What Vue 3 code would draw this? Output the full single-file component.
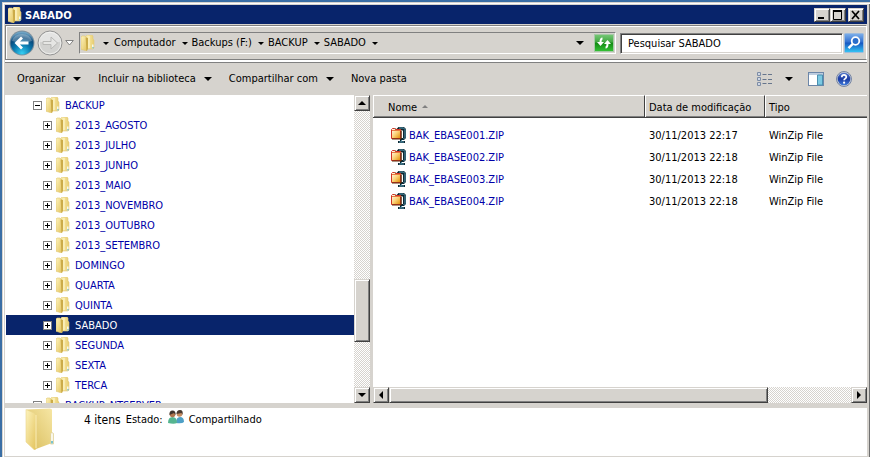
<script setup>
import { ref } from 'vue'

const crumbs = ['Computador', 'Backups (F:)', 'BACKUP', 'SABADO']
const commands = [
  { label: 'Organizar', menu: true },
  { label: 'Incluir na biblioteca', menu: true },
  { label: 'Compartilhar com', menu: true },
  { label: 'Nova pasta', menu: false },
]
const folders = [
  { name: 'BACKUP', root: true, open: true },
  { name: '2013_AGOSTO' },
  { name: '2013_JULHO' },
  { name: '2013_JUNHO' },
  { name: '2013_MAIO' },
  { name: '2013_NOVEMBRO' },
  { name: '2013_OUTUBRO' },
  { name: '2013_SETEMBRO' },
  { name: 'DOMINGO' },
  { name: 'QUARTA' },
  { name: 'QUINTA' },
  { name: 'SABADO' },
  { name: 'SEGUNDA' },
  { name: 'SEXTA' },
  { name: 'TERCA' },
  { name: 'BACKUP_NTSERVER', root: true },
]
const files = [
  { name: 'BAK_EBASE001.ZIP', date: '30/11/2013 22:17', type: 'WinZip File' },
  { name: 'BAK_EBASE002.ZIP', date: '30/11/2013 22:18', type: 'WinZip File' },
  { name: 'BAK_EBASE003.ZIP', date: '30/11/2013 22:18', type: 'WinZip File' },
  { name: 'BAK_EBASE004.ZIP', date: '30/11/2013 22:18', type: 'WinZip File' },
]
const selected = ref('SABADO')
const query = ref('')
</script>

<template>
  <svg class="defs" aria-hidden="true">
    <defs>
      <linearGradient id="gBack" x1="0" x2="1"><stop offset="0" stop-color="#fbf0b4" /><stop offset="1" stop-color="#e8cd70" /></linearGradient>
      <linearGradient id="gFront" x1="0" x2="1" y1="0" y2="1"><stop offset="0" stop-color="#fdf3bd" /><stop offset="1" stop-color="#e3c35c" /></linearGradient>
      <linearGradient id="gInner" x1="0" x2="1" y1="1" y2="0"><stop offset="0" stop-color="#d9bd5c" /><stop offset="1" stop-color="#f6e6a4" /></linearGradient>
      <linearGradient id="gZip" x1="0" x2="1" y1="0" y2="1"><stop offset="0" stop-color="#ffffff" /><stop offset=".5" stop-color="#fbd37a" /><stop offset="1" stop-color="#e08a00" /></linearGradient>
      <symbol id="folder" viewBox="0 0 14 16">
        <path d="M5 1 6 0h5l1 1v3l1 1v8l-1 1H6z" fill="url(#gBack)" stroke="#e2cb7c" stroke-width=".6" />
        <path d="M0 2 1 1h3l2 2v13l-1-.2-5-1.600z" fill="url(#gFront)" stroke="#dfc773" stroke-width=".6" />
        <path d="M4.600 2.500 7 3v11l-1.600 2z" fill="#cbab48" />
        <path d="M8 1v12" stroke="#fff6cc" />
        <path d="M11 9.500h1.500v4H11z" fill="#f4f8ee" />
        <path d="M11.500 12h1v1.500h-1z" fill="#4aa3b5" />
      </symbol>
      <symbol id="zip" viewBox="0 0 16 16">
        <path d="M6 1.500 7.500 0H13l2 2v9l-2 2h-2v1h3v2H7v-2h2v-3h3V4l-1-1H6z" fill="#0c2733" />
        <path d="M8 1h4.500L14 2.500v8L12.500 12" fill="none" stroke="#5b9db5" />
        <path d="M8 15h5M10.500 13v1.500" stroke="#5b9db5" />
        <path d="M1 3v-.500L2 1.500h3l1 1h4.500V12H1z" fill="#40220a" />
        <path d="M.500 2.500 1.500 1.500h2l1 1h5v9h-9z" fill="url(#gZip)" stroke="#d03224" />
        <path d="M1 3.500h8.500" stroke="#e8793e" />
        <path d="M10 4v8H1" fill="none" stroke="#5a2c08" />
      </symbol>
    </defs>
  </svg>

  <main class="window">
    <header class="titlebar">
      <svg class="folder"><use href="#folder" /></svg>
      <h1>SABADO</h1>
      <div class="winbuttons">
        <button class="raised" aria-label="Minimizar"><svg viewBox="0 0 12 10"><path d="M2 8h6" stroke="#000" stroke-width="2" /></svg></button>
        <button class="raised" aria-label="Maximizar"><svg viewBox="0 0 12 10"><path d="M1.500 1v8.500h8V1M1 1h9" fill="none" stroke="#000" /><path d="M1 1h9" stroke="#000" stroke-width="2" /></svg></button>
        <button class="raised close" aria-label="Fechar"><svg viewBox="0 0 12 10"><path d="m2 1 7 8M9 1 2 9" stroke="#000" stroke-width="1.700" /></svg></button>
      </div>
    </header>

    <nav class="navbar" aria-label="Navegação">
      <div class="history">
        <button class="plain" aria-label="Voltar">
          <svg class="round" viewBox="0 0 26 26">
            <defs><radialGradient id="gBlue" cx=".5" cy=".95" r=".9"><stop offset="0" stop-color="#35d0f4" /><stop offset=".45" stop-color="#0b78ad" /><stop offset=".75" stop-color="#0a4a7c" /><stop offset="1" stop-color="#6fa3c4" /></radialGradient></defs>
            <circle cx="13" cy="13" r="12.500" fill="#7d8f9c" />
            <circle cx="13" cy="13" r="11.500" fill="url(#gBlue)" />
            <path d="M3 11a10.500 10 0 0 1 20 0q-10 3-20 0z" fill="#fff" opacity=".28" />
            <path d="M19.500 13H8m5-5.500L7.500 13l5.500 5.500" fill="none" stroke="#fff" stroke-width="2.800" />
          </svg>
        </button>
        <button class="plain" aria-label="Avançar">
          <svg class="round" viewBox="0 0 26 26">
            <circle cx="13" cy="13" r="12" fill="#d2d2d0" stroke="#969696" />
            <circle cx="13" cy="13" r="10.800" fill="none" stroke="#eeeeec" />
            <path d="M3 12a10 10 0 0 1 20 0z" fill="#fff" opacity=".4" />
            <path d="M6 11.500h8V7l6.500 6-6.500 6v-4.500H6z" fill="#e6e6e4" stroke="#b8b8b6" />
          </svg>
        </button>
        <button class="plain" aria-label="Páginas recentes"><svg class="chev" viewBox="0 0 9 6"><path d="M.700.500h7.600L4.500 5z" fill="#fff" stroke="#777" stroke-width=".9" /></svg></button>
      </div>
      <div class="address">
        <svg class="folder"><use href="#folder" /></svg>
        <button class="plain lead" aria-label="Locais"><i class="tri small"></i></button>
        <button v-for="c in crumbs" :key="c" class="plain crumb">{{ c }}<i class="tri small"></i></button>
        <button class="plain drop" aria-label="Locais anteriores"><i class="tri"></i></button>
        <button class="plain refresh" aria-label="Atualizar">
          <svg viewBox="0 0 20 18">
            <defs><linearGradient id="gGreen" x2="0" y2="1"><stop offset="0" stop-color="#79c878" /><stop offset=".45" stop-color="#3fa63f" /><stop offset=".5" stop-color="#128912" /><stop offset="1" stop-color="#35c336" /></linearGradient></defs>
            <rect x=".5" y=".5" width="19" height="17" fill="url(#gGreen)" stroke="#a5c9a5" />
            <path d="M3 8h7l-3.500 4zM10 10h7l-3.500-4z" fill="#fff" />
            <path d="M8.500 4.500q-2 0-2 4M11.500 13.500q2 0 2-4" fill="none" stroke="#fff" stroke-width="2" />
          </svg>
        </button>
      </div>
      <form class="search" @submit.prevent>
        <input v-model="query" type="text" aria-label="Pesquisar SABADO" placeholder="Pesquisar SABADO">
        <button class="plain" aria-label="Pesquisar">
          <svg viewBox="0 0 20 20">
            <defs><linearGradient id="gSearch" x2="0" y2="1"><stop offset="0" stop-color="#7fb0ea" /><stop offset=".45" stop-color="#2f6fd0" /><stop offset=".5" stop-color="#1656c0" /><stop offset="1" stop-color="#35c8f5" /></linearGradient></defs>
            <rect x=".5" y=".5" width="19" height="19" rx="1" fill="url(#gSearch)" stroke="#9dbbdd" />
            <circle cx="11.500" cy="8" r="3.800" fill="#2a6dcb" stroke="#fff" stroke-width="1.800" />
            <path d="m8.800 10.800-4.300 4.400" stroke="#fff" stroke-width="2.400" />
          </svg>
        </button>
      </form>
    </nav>

    <div class="toolbar" role="toolbar">
      <button v-for="c in commands" :key="c.label" class="plain command">{{ c.label }}<i v-if="c.menu" class="tri"></i></button>
      <div class="views">
        <button class="plain" aria-label="Modo de exibição">
          <svg width="16" height="14" viewBox="0 0 16 14">
            <path d="M.500.500h3v3h-3zM.500 5.500h3v3h-3zM.500 10.500h3v3h-3z" fill="#fff" stroke="#7d8ca6" />
            <path d="M1.500 2h1M1.500 7h1M1.500 12h1" stroke="#3f5f94" />
            <path d="M5.500 2.500h4M11 2.500h4M5.500 7.500h4M11 7.500h4M5.500 11.500h4M11 11.500h4" stroke="#66758c" />
          </svg>
        </button>
        <button class="plain" aria-label="Mais opções"><i class="tri"></i></button>
        <button class="plain preview" aria-label="Painel de visualização">
          <svg width="16" height="14" viewBox="0 0 16 14">
            <rect x=".5" y=".5" width="15" height="13" fill="#fff" stroke="#6c86a8" />
            <path d="M1 2h14" stroke="#a9bcd4" stroke-width="1.500" />
            <path d="M9.500 3h5v10h-5z" fill="#7cc9e2" stroke="#4a90b0" />
          </svg>
        </button>
        <button class="plain" aria-label="Ajuda">
          <svg width="16" height="16" viewBox="0 0 16 16">
            <defs><linearGradient id="gHelp" x2="0" y2="1"><stop offset="0" stop-color="#5478cd" /><stop offset=".5" stop-color="#1b3ba3" /><stop offset="1" stop-color="#3f7bdb" /></linearGradient></defs>
            <circle cx="8" cy="8" r="7.500" fill="#c3cbd8" stroke="#7785a3" />
            <circle cx="8" cy="8" r="6.300" fill="url(#gHelp)" />
            <path d="M5.800 6.200c0-3 4.600-2.900 4.500-.2 0 1.700-2.200 1.600-2.200 3.300" fill="none" stroke="#fff" stroke-width="1.700" />
            <circle cx="8.100" cy="11.700" r="1.100" fill="#fff" />
          </svg>
        </button>
      </div>
    </div>

    <div class="panes">
      <section class="treepane" aria-label="Pastas">
        <ul class="tree">
          <li v-for="f in folders" :key="f.name" :class="{ root: f.root, selected: f.name === selected }" @click="selected = f.name">
            <button class="toggle" :aria-label="'Expandir ' + f.name">
              <svg viewBox="0 0 9 9"><rect x=".5" y=".5" width="8" height="8" fill="#fff" stroke="#808080" /><path :d="f.open ? 'M2 4.500h5' : 'M2 4.500h5M4.500 2v5'" stroke="#000" /></svg>
            </button>
            <svg class="folder"><use href="#folder" /></svg>
            <span>{{ f.name }}</span>
          </li>
        </ul>
        <div class="vscroll">
          <button class="raised" aria-label="Rolar para cima"><i class="tri up"></i></button>
          <div class="track before"></div>
          <div class="raised thumb"></div>
          <div class="track after"></div>
          <button class="raised" aria-label="Rolar para baixo"><i class="tri"></i></button>
        </div>
      </section>

      <section class="filepane" aria-label="Arquivos">
        <table>
          <thead>
            <tr>
              <th class="name">Nome <i class="tri up sort"></i></th>
              <th class="date">Data de modificação</th>
              <th class="type">Tipo</th>
            </tr>
          </thead>
          <tbody>
            <tr v-for="f in files" :key="f.name">
              <td class="name"><div><svg class="zip"><use href="#zip" /></svg><a href="#">{{ f.name }}</a></div></td>
              <td>{{ f.date }}</td>
              <td>{{ f.type }}</td>
            </tr>
          </tbody>
        </table>
        <div class="hscroll">
          <button class="raised" aria-label="Rolar para a esquerda"><i class="tri left"></i></button>
          <div class="raised thumb"></div>
          <div class="track"></div>
          <button class="raised" aria-label="Rolar para a direita"><i class="tri right"></i></button>
        </div>
      </section>
    </div>

    <footer class="details">
      <svg class="bigfolder" viewBox="0 0 30 42">
        <path d="M2 1.500 25 .500l2 1V35L11 41z" fill="url(#gInner)" />
        <path d="M1 1.500 9 5l2 2v34l-1.500 1L1 34z" fill="url(#gFront)" stroke="#ead58c" stroke-width=".6" />
        <path d="M11 7v33" stroke="#fff4c0" stroke-width=".8" />
        <path d="M25.500 25.500q1.500-2 3 0V36h-3z" fill="#f9f7ea" stroke="#dccb8c" stroke-width=".7" />
        <path d="M26 33h2v2.500h-2z" fill="#79c4d0" />
      </svg>
      <p>
        <span class="count">4 itens</span>
        <span>Estado:</span>
        <svg class="people" viewBox="0 0 16 14">
          <path d="M8 13q0-6 4-6t4 5q-2 2-8 1z" fill="#4d9fc6" />
          <circle cx="11.500" cy="4" r="2.800" fill="#c48a60" /><path d="M8.500 4q0-4 3.500-4t2.500 5l-1-2z" fill="#4a3a30" />
          <path d="M0 13q0-6 4.500-6T9 13q-3 1.500-9 0z" fill="#55b590" />
          <circle cx="4.500" cy="4.500" r="2.800" fill="#b0754e" /><path d="M1.500 5q-.500-4.500 3-4.500t3 4.500l-1.500-2z" fill="#40332c" />
        </svg>
        <span>Compartilhado</span>
      </p>
    </footer>
  </main>
</template>

<style>
body { background: #3a6ea5; overflow: hidden; }
</style>

<style scoped>
* { box-sizing: border-box; }
.defs { position: absolute; width: 0; height: 0; }
.window {
  height: 100vh;
  display: flex;
  flex-direction: column;
  background: #d6d3ce;
  border: 2px solid #3a6ea5;
  border-width: 2px 0 0 2px;
  box-shadow: inset 1px 1px #d6d3ce, inset 2px 2px #fff, inset -1px 0 #707070;
  padding: 3px 3px 1px;
  font: 11px/14px "DejaVu Sans Condensed", "DejaVu Sans", sans-serif;
  color: #000;
}
svg { display: block; flex: none; }
button { font: inherit; color: inherit; padding: 0; display: flex; align-items: center; justify-content: center; flex: none; }
.plain { border: 0; background: none; }
.raised {
  background: #d6d3ce;
  border: 1px solid;
  border-color: #d6d3ce #404040 #404040 #d6d3ce;
  box-shadow: inset 1px 1px #fff, inset -1px -1px #808080;
}
.folder { width: 14px; height: 16px; }
.tri { width: 0; height: 0; border: 4px solid transparent; border-top-color: #000; border-bottom: 0; }
.tri.small { border-width: 3px 3px 0; }
.tri.up { border: 4px solid transparent; border-bottom-color: #000; border-top: 0; }
.tri.left { border: 4px solid transparent; border-right-color: #000; border-left: 0; }
.tri.right { border: 4px solid transparent; border-left-color: #000; border-right: 0; }

.titlebar { display: flex; align-items: center; gap: 3px; height: 19px; flex: none; padding: 0 3px; background: #08246b; color: #fff; }
.titlebar h1 { font-size: 11px; line-height: 14px; margin: 0; padding-top: 2px; }
.winbuttons { display: flex; margin-left: auto; }
.winbuttons button { width: 16px; height: 14px; }
.winbuttons svg { width: 12px; height: 10px; }
.winbuttons .close { margin-left: 2px; }

.navbar {
  display: flex;
  align-items: center;
  gap: 4px;
  height: 35px;
  flex: none;
  margin-top: 1px;
  padding: 1px 2px 0 3px;
  border: 1px solid #808080;
  border-right-color: #fff;
  box-shadow: inset 1px 1px #fff, 0 2px #fff;
}
.history { display: flex; align-items: center; gap: 2px; width: 66px; }
.round { width: 26px; height: 26px; }
.chev { width: 9px; height: 6px; }
.address {
  flex: 1;
  display: flex;
  align-items: center;
  height: 22px;
  padding: 0 1px;
  border: 1px solid;
  border-color: #808080 #fff #fff #808080;
}
.lead { margin: 0 5px 0 8px; }
.crumb { gap: 6px; margin-right: 4px; }
.drop { margin: 0 10px 0 auto; }
.refresh svg { width: 20px; height: 18px; }
.search { display: flex; align-items: center; gap: 1px; width: 244px; }
.search input {
  flex: 1;
  min-width: 0;
  height: 21px;
  padding: 0 7px;
  font: inherit;
  background: #fff;
  border: 1px solid;
  border-color: #808080 #fff #fff #808080;
  box-shadow: inset 1px 1px #404040, inset -1px -1px #d6d3ce;
  border-radius: 0;
  outline: 0;
}
.search input::placeholder { color: #000; opacity: 1; }
.search svg { width: 20px; height: 20px; }

.toolbar { display: flex; align-items: center; gap: 17px; height: 33px; flex: none; padding: 0 15px 0 12px; margin-top: 2px; border-top: 1px solid #808080; }
.command { gap: 8px; }
.views { display: flex; align-items: center; gap: 12px; margin-left: auto; }
.preview { margin-left: 3px; }

.panes { flex: 1; min-height: 0; display: flex; gap: 3px; }
.treepane { width: 365px; flex: none; display: flex; background: #fff; }
.tree { flex: 1; min-width: 0; margin: 0; padding: 0 0 0 1px; list-style: none; overflow: hidden; color: #0000a8; }
.tree li { display: flex; align-items: center; height: 20px; padding-left: 37px; cursor: default; }
.tree li.root { padding-left: 27px; }
.tree li.selected { background: #08246b; color: #fff; }
.tree li span { padding-top: 2px; }
.tree .folder { margin: 0 5px 0 4px; }
.toggle { border: 0; background: none; width: 9px; height: 9px; }
.toggle svg { width: 9px; height: 9px; }
.track { background: repeating-conic-gradient(#d6d3ce 0 25%, #fff 0 50%) 0 0 / 2px 2px; }
.vscroll { width: 16px; display: flex; flex-direction: column; }
.vscroll button { height: 16px; }
.vscroll .before { flex: 169; }
.vscroll .thumb { flex: 62; }
.vscroll .after { flex: 45; }

.filepane { flex: 1; min-width: 0; display: flex; flex-direction: column; background: #fff; }
table { width: 100%; table-layout: fixed; border-collapse: separate; border-spacing: 0; }
th {
  height: 23px;
  padding: 3px 4px 0;
  font-weight: normal;
  text-align: left;
  background: #d6d3ce;
  border-top: 1px solid #fff;
  border-right: 1px solid #404040;
  border-bottom: 1px solid #404040;
  box-shadow: inset 1px 0 #fff, inset 0 -1px #808080;
}
th.name { width: 272px; padding-left: 15px; }
th.date { width: 120px; }
th.type { border-right: 0; }
.sort { display: inline-block; margin-left: 2px; vertical-align: 3px; }
.tri.sort { border-width: 0 3px 3px; border-bottom-color: #808080; }
td { height: 22px; padding: 2px 4px 0; }
tbody::before { content: ""; display: table-row; height: 6px; }
td.name { padding: 0 0 0 18px; }
td div { display: flex; align-items: center; gap: 2px; }
td a { padding-top: 2px; }
.zip { width: 16px; height: 16px; }
a { color: #0000a8; text-decoration: none; }
.hscroll { display: flex; height: 16px; margin-top: auto; }
.hscroll button { width: 16px; }
.hscroll .thumb { flex: 379; }
.hscroll .track { flex: 83; }

.details { display: flex; gap: 29px; height: 48px; flex: none; margin-top: 5px; padding: 0 0 0 20px; background: #fff; }
.bigfolder { width: 30px; height: 42px; }
.details p { display: flex; align-items: center; gap: 5px; height: 24px; margin: 0; }
.count { font-size: 12px; }
.people { width: 16px; height: 14px; margin-bottom: 6px; }
</style>
